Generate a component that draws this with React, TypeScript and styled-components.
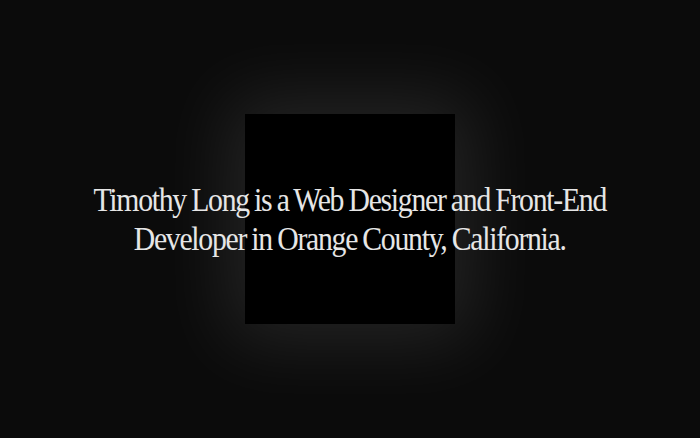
import styled, { createGlobalStyle } from 'styled-components';

const GlobalStyle = createGlobalStyle`
  html, body, #root {
    margin: 0;
    height: 100%;
  }
  body {
    background-color: #0b0b0b;
    overflow: hidden;
  }
`;

const Stage = styled.main`
  height: 100vh;
  display: grid;
  place-items: center;
  background-color: #0b0b0b;
`;

const Frame = styled.div`
  grid-area: 1 / 1;
  width: 210px;
  height: 210px;
  background-color: #000;
  box-shadow: 0 0 70px 18px rgba(255, 255, 255, 0.1);
`;

const Intro = styled.h1`
  grid-area: 1 / 1;
  z-index: 1;
  margin: 0;
  font-family: 'Liberation Serif', 'Times New Roman', serif;
  font-weight: 400;
  font-size: 33px;
  line-height: 39px;
  letter-spacing: -1.4px;
  word-spacing: -1px;
  color: #e6e6e6;
  text-align: center;
  white-space: nowrap;
  transform: translateY(1px) scaleX(0.9);
`;

const App = () => {
  return (
    <>
      <GlobalStyle />
      <Stage>
        <Frame />
        <Intro>
          Timothy Long is a Web Designer and Front-End
          <br />
          Developer in Orange County, California.
        </Intro>
      </Stage>
    </>
  );
};

export default App;
